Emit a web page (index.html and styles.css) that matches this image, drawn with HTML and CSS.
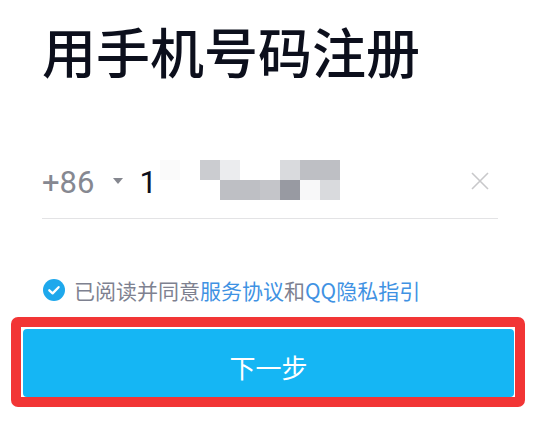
FILE: index.html
```html
<!DOCTYPE html>
<html lang="zh-CN">
<head>
<meta charset="utf-8">
<title>用手机号码注册</title>
<link rel="stylesheet" href="styles.css">
</head>
<body>
<main class="page">
  <h1 class="title">用手机号码注册</h1>

  <div class="phone">
    <span class="code">+86</span>
    <svg class="caret" width="10" height="6" viewBox="0 0 10 6"><path d="M0 0 H10 L5 6 Z" fill="#85878f"/></svg>
    <span class="num">1</span>
    <div class="mosaic">
      <i class="c1"></i><i></i><i class="c2"></i><i class="c3"></i><i></i><i></i><i class="c4"></i><i class="c5"></i><i class="c5"></i>
      <i></i><i></i><i></i><i class="c5"></i><i class="c5"></i><i class="c6"></i><i class="c7"></i><i class="c8"></i><i class="c4"></i>
    </div>
    <svg class="clear" width="18" height="18" viewBox="0 0 18 18"><path d="M1 1 L17 17 M17 1 L1 17" stroke="#c8c8ca" stroke-width="1.6" fill="none"/></svg>
  </div>

  <div class="agree">
    <svg class="check" width="22" height="22" viewBox="0 0 22 22"><circle cx="11" cy="11" r="11" fill="#1ea8ec"/><path d="M6.3 11.3 L9.6 14.4 L15.6 8.2" stroke="#fff" stroke-width="2.3" fill="none" stroke-linecap="round" stroke-linejoin="round"/></svg>
    <p class="agree-text">已阅读并同意<a class="link">服务协议</a>和<a class="link">QQ隐私指引</a></p>
  </div>

  <div class="frame">
    <button class="next">下一步</button>
  </div>
</main>
</body>
</html>
```

FILE: styles.css
```css
html, body {
  margin: 0;
  background: #ffffff;
}
body {
  font-family: "Noto Sans CJK SC", "Noto Sans", sans-serif;
}
.page {
  padding: 24px 42px 0;
}
.title {
  margin: 0;
  font-size: 54px;
  line-height: 54px;
  font-weight: 500;
  color: #0c0f1c;
}
.phone {
  margin-top: 82px;
  display: flex;
  align-items: center;
  height: 40px;
  padding-bottom: 18px;
  border-bottom: 1px solid #e3e3e5;
}
.code, .num {
  font-family: Roboto, "Noto Sans", sans-serif;
  font-size: 31px;
  line-height: 40px;
  padding-top: 6px;
}
.code {
  color: #868891;
}
.caret {
  margin-left: 19px;
  margin-top: 2px;
}
.num {
  margin-left: 16px;
  color: #0c0f1c;
}
.mosaic {
  margin-left: 3px;
  display: grid;
  grid-template-columns: repeat(9, 20px);
  grid-template-rows: repeat(2, 20px);
}
.mosaic i {
  display: block;
  background: #ffffff;
}
.mosaic .c1 { background: #fafafa; }
.mosaic .c2 { background: #cbccd0; }
.mosaic .c3 { background: #ebecee; }
.mosaic .c4 { background: #d9dadd; }
.mosaic .c5 { background: #bebfc4; }
.mosaic .c6 { background: #c4c5c9; }
.mosaic .c7 { background: #989aa2; }
.mosaic .c8 { background: #f8f8f9; }
.clear {
  margin-left: auto;
  margin-right: 9px;
  margin-top: 2px;
}
.agree {
  margin-top: 60px;
  display: flex;
  align-items: center;
  height: 22px;
}
.check {
  margin-left: 1px;
  flex: none;
}
.agree-text {
  margin: 0 0 0 9px;
  font-size: 21px;
  line-height: 22px;
  color: #7e8190;
  white-space: nowrap;
}
.link {
  color: #3f92e3;
}
.frame {
  margin: 16px -27px 0 -31px;
  border: 10px solid #f23535;
  border-radius: 7px;
  padding: 2px 1px 0 2px;
  height: 68px;
}
.next {
  display: flex;
  align-items: center;
  justify-content: center;
  width: 100%;
  height: 68px;
  padding: 6px 0 0;
  border: none;
  border-radius: 4px;
  background: #15b6f4;
  color: #ffffff;
  font-family: "Noto Sans CJK SC", sans-serif;
  font-size: 26px;
}
```
